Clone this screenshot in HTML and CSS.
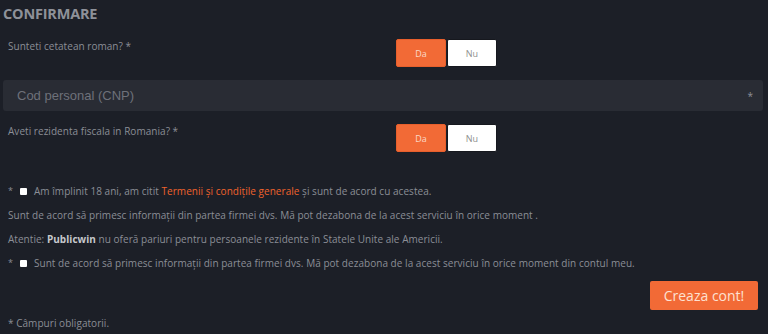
FILE: index.html
```html
<!DOCTYPE html>
<html lang="ro">
<head>
<meta charset="utf-8">
<title>Confirmare</title>
<link rel="stylesheet" href="styles.css">
</head>
<body>
<form class="form">
  <h2 class="title">CONFIRMARE</h2>
  <div class="row row-first">
    <label class="label">Sunteti cetatean roman? *</label>
    <div class="toggle">
      <button type="button" class="opt opt-on">Da</button>
      <button type="button" class="opt">Nu</button>
    </div>
  </div>
  <div class="field">
    <input class="input" type="text" placeholder="Cod personal (CNP)">
    <span class="req">*</span>
  </div>
  <div class="row row-second">
    <label class="label">Aveti rezidenta fiscala in Romania? *</label>
    <div class="toggle">
      <button type="button" class="opt opt-on">Da</button>
      <button type="button" class="opt">Nu</button>
    </div>
  </div>
  <div class="checks">
    <label class="check"><span class="star">*</span><span class="box"></span><span>Am împlinit 18 ani, am citit <a class="link" href="#">Termenii și condițile generale</a> și sunt de acord cu acestea.</span></label>
    <p class="text">Sunt de acord să primesc informații din partea firmei dvs. Mă pot dezabona de la acest serviciu în orice moment .</p>
    <p class="text">Atentie: <b class="brand">Publicwin</b> nu oferă pariuri pentru persoanele rezidente în Statele Unite ale Americii.</p>
    <label class="check"><span class="star">*</span><span class="box"></span><span>Sunt de acord să primesc informații din partea firmei dvs. Mă pot dezabona de la acest serviciu în orice moment din contul meu.</span></label>
  </div>
  <div class="actions">
    <button type="button" class="submit">Creaza cont!</button>
  </div>
  <p class="text footnote">* Câmpuri obligatorii.</p>
</form>
</body>
</html>
```
FILE: styles.css
```css
html, body {
  margin: 0;
  padding: 0;
  background: #1c1f27;
}
body {
  font-family: "Open Sans", "Liberation Sans", sans-serif;
  color: #8b8e96;
  font-size: 10px;
  letter-spacing: 0.04px;
}
.form {
  padding: 0 5px 0 3px;
}
.title {
  margin: 0;
  padding-top: 5px;
  font-size: 14.5px;
  line-height: 18px;
  font-weight: 700;
  color: #8e9199;
  letter-spacing: -0.2px;
}
.row {
  display: grid;
  grid-template-columns: 393px 1fr;
  align-items: start;
}
.row-first {
  margin-top: 16px;
}
.row-second {
  margin-top: 13px;
}
.label {
  padding-left: 5px;
  line-height: 14px;
  color: #8b8e96;
}
.toggle {
  display: flex;
  gap: 1px;
}
.opt {
  width: 50px;
  height: 28px;
  border: 1px solid #16181e;
  border-radius: 2px;
  background: #ffffff;
  color: #8e8e8e;
  font-family: inherit;
  font-size: 9px;
  padding: 0;
}
.opt-on {
  background: #f26a36;
  color: #fbd9c6;
  border-color: #e75f2c;
}
.field {
  position: relative;
  margin-top: 13px;
}
.input {
  display: block;
  box-sizing: border-box;
  width: 760px;
  height: 31px;
  border: none;
  border-radius: 3px;
  background: #292c34;
  padding: 0 14px;
  font-family: "Liberation Sans", Arial, sans-serif;
  font-size: 13px;
  color: #c0c0c0;
  outline: none;
}
.input::placeholder {
  color: #6e717a;
}
.req {
  position: absolute;
  right: 10px;
  top: 9px;
  font-size: 10px;
  color: #8e9199;
}
.checks {
  margin-top: 32px;
  display: flex;
  flex-direction: column;
  gap: 10px;
}
.check {
  display: flex;
  align-items: center;
  padding-left: 5px;
  line-height: 14px;
}
.star {
  width: 12px;
  font-size: 9px;
}
.box {
  width: 7px;
  height: 7px;
  background: #ffffff;
  border-radius: 1px;
  margin-right: 7px;
}
.link {
  color: #f0622c;
  text-decoration: none;
}
.text {
  margin: 0;
  padding-left: 5px;
  line-height: 14px;
}
.brand {
  color: #c6c8cc;
}
.actions {
  display: flex;
  justify-content: flex-end;
  margin-top: 11px;
  padding-right: 5px;
}
.submit {
  width: 108px;
  height: 29px;
  border: none;
  border-radius: 2px;
  background: #f26a36;
  color: #fde1d2;
  font-family: inherit;
  font-size: 14px;
  padding: 0;
}
.footnote {
  margin-top: 6px;
}
```
